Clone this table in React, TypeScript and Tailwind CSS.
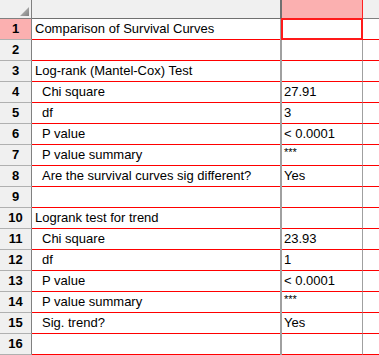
import React from 'react';

type Row = { label: string; value: string; indent?: boolean };

const rows: Row[] = [
  { label: 'Comparison of Survival Curves', value: '' },
  { label: '', value: '' },
  { label: 'Log-rank (Mantel-Cox) Test', value: '' },
  { label: 'Chi square', value: '27.91', indent: true },
  { label: 'df', value: '3', indent: true },
  { label: 'P value', value: '< 0.0001', indent: true },
  { label: 'P value summary', value: '***', indent: true },
  { label: 'Are the survival curves sig different?', value: 'Yes', indent: true },
  { label: '', value: '' },
  { label: 'Logrank test for trend', value: '' },
  { label: 'Chi square', value: '23.93', indent: true },
  { label: 'df', value: '1', indent: true },
  { label: 'P value', value: '< 0.0001', indent: true },
  { label: 'P value summary', value: '***', indent: true },
  { label: 'Sig. trend?', value: 'Yes', indent: true },
  { label: '', value: '' },
];

export default function App() {
  return (
    <div
      className="relative w-[379px] h-[355px] overflow-hidden bg-white text-[13px] text-black"
      style={{ fontFamily: '"Liberation Sans", Arial, sans-serif' }}
    >
      {/* Column headers */}
      <div className="flex h-[19px]">
        <div className="w-[32px] h-full bg-[#f0f0f0] border-r border-b border-[#808080] relative">
          <svg className="absolute left-[20px] top-[7px]" width="10" height="10" viewBox="0 0 10 10">
            <defs>
              <linearGradient id="tri" x1="0" y1="0" x2="1" y2="1">
                <stop offset="0" stopColor="#c8c8c8" />
                <stop offset="1" stopColor="#808080" />
              </linearGradient>
            </defs>
            <polygon points="9,0 9,9 0,9" fill="url(#tri)" />
          </svg>
        </div>
        <div className="w-[250px] h-full bg-[#f0f0f0] border-r-2 border-b border-[#707070]" />
        <div className="w-[81px] h-full bg-[#fbb0b0] border-r border-r-[#ff2020] border-b border-b-[#707070]" />
        <div className="flex-1 h-full bg-[#f0f0f0] border-b border-[#808080]" />
      </div>

      {/* Data rows */}
      {rows.map((r, i) => (
        <div key={i} className="flex h-[21px]">
          <div
            className={
              'w-[32px] h-full border-r border-r-[#808080] border-b border-b-[#b0b0b0] flex items-center justify-center font-bold ' +
              (i === 0 ? 'bg-[#fbb0b0]' : 'bg-[#f0f0f0]')
            }
          >
            {i + 1}
          </div>
          <div
            className={
              'w-[248px] h-full border-b border-[#ff0000] flex items-center whitespace-nowrap ' +
              (r.indent ? 'pl-[10px]' : 'pl-[3px]')
            }
          >
            {r.label}
          </div>
          <div className="w-[2px] h-full bg-[#a0a0a0]" />
          <div className="w-[81px] h-full border-r border-r-[#a0a0a0] border-b border-b-[#ff0000] flex items-center pl-[2px] whitespace-nowrap">
            {r.value === '***' ? <span className="text-[11px] leading-none -mt-[6px]">***</span> : r.value}
          </div>
          <div className="flex-1 h-full border-b border-[#ff0000]" />
        </div>
      ))}

      {/* Selected cell outline */}
      <div className="absolute left-[281px] top-[18px] w-[82px] h-[22px] border-2 border-[#ff1a1a] pointer-events-none" />
    </div>
  );
}
